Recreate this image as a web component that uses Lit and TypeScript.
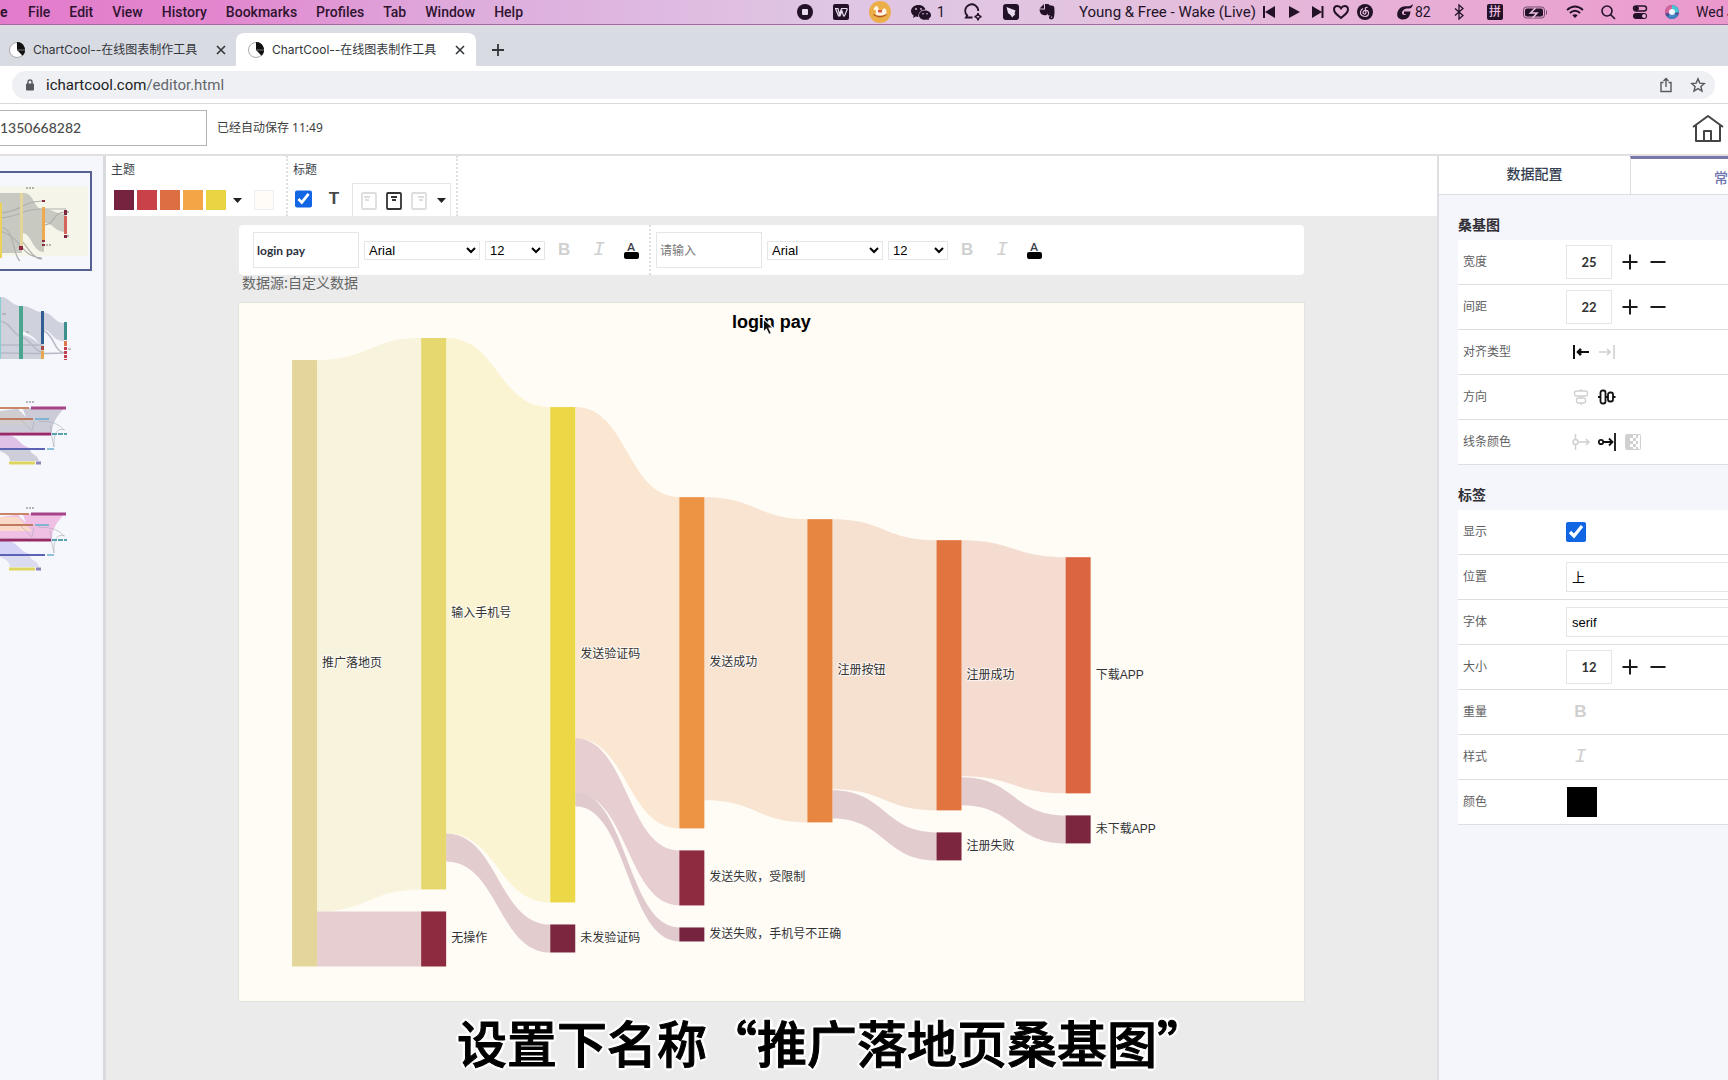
import { LitElement, html, css, svg } from "lit";
import { customElement, state } from "lit/decorators.js";

/* Shared look of every control in the editor. */
const base = css`
  *, *::before, *::after { box-sizing: border-box; }
  svg { display: block; flex: none; }
  button {
    appearance: none; border: 0; background: none; padding: 0; margin: 0;
    font: inherit; color: inherit; cursor: pointer;
    display: flex; align-items: center; justify-content: center;
  }
  input, select { margin: 0; border-radius: 0; outline: none; }
  .check { width: 20px; height: 20px; accent-color: #1266e3; }
  .off { color: #d0d0d0; }
`;

/* ---------------------------------------------------------------- menu bar */

@customElement("menu-bar")
export class MenuBar extends LitElement {
  static styles = [base, css`
    :host {
      display: flex; align-items: center; height: 25px; overflow: hidden;
      font: 500 14px/24px Roboto, "Noto Sans CJK SC", sans-serif; color: #2f1430;
      background: linear-gradient(90deg, #e37bcb 0%, #e287cf 13%, #deacdc 27%, #dfc6e4 48%, #e2c4e0 62%, #e7b3d8 78%, #eb98cd 100%);
      border-bottom: 1px solid #a2689f;
    }
    nav { display: flex; gap: 19px; }
    nav a { color: inherit; text-decoration: none; }
    .app { font-weight: 700; width: 9px; }
    .status { display: flex; align-items: center; margin-left: auto; flex: none; color: #231227; }
    .wide { display: flex; align-items: center; gap: 20px; }
    .near { display: flex; align-items: center; gap: 16px; margin-left: 18px; }
    .player { display: flex; align-items: center; gap: 8px; margin-left: 6px; }
    .song { margin-left: 24px; width: 176px; font-size: 15px; font-weight: 400; white-space: nowrap; }
    .pair { display: flex; align-items: center; gap: 2px; width: 34px; font-weight: 400; }
    .chat { width: 32px; gap: 6px; }
    .stats { margin-left: 24px; }
    .ime { width: 16px; height: 16px; border-radius: 2px; background: #231227; color: #eebbe0; font-size: 12px; line-height: 16px; text-align: center; }
    .date { width: 32px; white-space: nowrap; font-weight: 400; }
  `];

  render() {
    return html`
      <nav aria-label="menu">
        <a class="app" href="#">e</a>
        ${["File", "Edit", "View", "History", "Bookmarks", "Profiles", "Tab", "Window", "Help"].map((m) => html`<a href="#">${m}</a>`)}
      </nav>
      <div class="status">
        <div class="wide">
          <svg width="16" height="16"><circle cx="8" cy="8" r="8" fill="#231227"/><rect x="5" y="5" width="6" height="6" rx="1" fill="#eadcf0"/></svg>
          <svg width="16" height="16"><rect width="16" height="16" rx="2" fill="#231227"/><path d="M2 4.500h3l1.500 6 2-6h5.500M2.500 4.500l3 7.500h1.500l2-5 1.500 5h1l3-7.500" fill="none" stroke="#eadcf0" stroke-width="1.200"/></svg>
          <svg width="22" height="22"><circle cx="11" cy="11" r="11" fill="#ecae48"/><path d="M4.500 8.500L6 5.500l2.500-.5 1.500 4h3.500l1.500-2 2 1.500.5 3-1 3H6.500l.5-5z" fill="#fff6e6"/><path d="M9 9h4v2.500H9z" fill="#d4574b"/><path d="M4.500 13.500q6.500 4.500 13 0" fill="none" stroke="#b25d1f" stroke-width="1.500"/></svg>
          <div class="pair chat">
            <svg width="20" height="16" fill="#231227"><path d="M7.500 1C3.300 1 0 3.700 0 7c0 1.900 1 3.500 2.700 4.600L2 14l2.700-1.400c.9.2 1.700.4 2.700.4C7 9 10 5.500 14.500 5.500 13.800 2.900 11 1 7.500 1z"/><path d="M14 6.500c-3.300 0-6 2-6 4.700s2.700 4.600 6 4.600c.7 0 1.400-.1 2-.3l2 .9-.4-1.700c1.500-.9 2.400-2.100 2.400-3.500 0-2.700-2.700-4.700-6-4.700z"/><g fill="#dfc6e4"><circle cx="5" cy="5" r=".9"/><circle cx="10" cy="5" r=".9"/><circle cx="12" cy="9.800" r=".8"/><circle cx="16" cy="9.800" r=".8"/></g></svg><span>1</span>
          </div>
          <svg width="20" height="18" fill="none" stroke="#231227" stroke-width="1.800"><path d="M9.500 14.500H3l1.200-2A6.500 6.500 0 1 1 15.200 8"/><path d="M15 10q.5 3.200 3.500 3.700-3 .500-3.500 3.700-.5-3.200-3.500-3.700 3-.5 3.500-3.700z" stroke-width="1.300"/></svg>
          <svg width="16" height="16"><rect width="16" height="16" rx="3" fill="#231227"/><path d="M3.500 3l9 3.500-1 3 1 .5-3.500 3.500-1-2L5 9z" fill="#eadcf0"/></svg>
          <svg width="16" height="18" fill="#231227"><path d="M5 1 .5 5.500H5zM6 1h3c1 0 1.500.8 1.500 1.300C13 2.500 15 2.800 15.200 4c.5 3.500.5 8-.5 11-.7 2-4.700 2-4.700-.5 0-1.500 1-2 2.500-2v1.500H12c-.5 1 1 1 1.200 0 .2-1-1-1.800-3.200-1.500-1 0-1.500-.8-1.600-2C8 12 7 12.500 5.500 12.200 2.500 12 1 10.500.5 6.500H6z"/></svg>
        </div>
        <span class="song">Young &amp; Free - Wake (Live)</span>
        <div class="player">
          <svg width="16" height="16" fill="#231227"><path d="M2 2h2v12H2zM14 2v12L4 8z"/></svg>
          <svg width="16" height="16" fill="#231227"><path d="M4 2l11 6-11 6z"/></svg>
          <svg width="16" height="16" fill="#231227"><path d="M12.500 2h2v12h-2zM3 2v12l10-6z"/></svg>
          <svg width="16" height="16" fill="none" stroke="#231227" stroke-width="2"><path d="M8 14C3.500 10.500 1 8.500 1 5.600 1 3.400 2.600 2 4.400 2 6 2 7.300 3 8 4.200 8.700 3 10 2 11.600 2 13.400 2 15 3.400 15 5.600 15 8.500 12.500 10.500 8 14z"/></svg>
          <svg width="16" height="16" fill="none" stroke="#eabfe0" stroke-width="1.200"><circle cx="8" cy="8" r="8" fill="#231227" stroke="none"/><path d="M10.500 3.500Q8 3 8.300 5l.7 3.500a1.500 1.500 0 1 1-2.700-.8C6.800 6.500 10 5.500 11.200 7.500 12.500 10 11 12.500 8 12.500S3 10.500 3.500 8Q4 5.500 6 4.500"/></svg>
        </div>
        <div class="wide stats">
          <span class="pair"><svg width="16" height="16" fill="#231227"><path d="M16 0c-.5 3-2 4.500-4 4.500C8.500 4 5 6 5 9c0 2.200 3.200 2.500 4.300 1H7V7.500h6.500C13 12.500 10.500 15.500 6 15.500 2 15.500 0 13 .2 10 .5 5.500 4 2 9 2.200 12 2.400 14 2 16 0z"/></svg>82</span>
          <svg width="16" height="16" fill="none" stroke="#231227" stroke-width="1.300"><path d="M4 4.500l8 7L8 15V1l4 3.500-8 7"/></svg>
          <span class="ime">拼</span>
          <svg width="25" height="13" fill="none" stroke="#231227"><rect x=".5" y="1" width="21" height="11" rx="3" opacity=".6"/><rect x="2" y="2.500" width="18" height="8" rx="2" fill="#231227" stroke="none"/><path d="M23.500 4.500v4" opacity=".6"/><path d="M12.500 2L7.500 7H14L9.500 12" stroke="#eabfe0" stroke-width="1.600"/></svg>
        </div>
        <div class="near">
          <svg width="18" height="14" fill="none" stroke="#231227" stroke-width="1.800"><path d="M1 5q8-7 16 0M3.800 8q5.200-4.500 10.400 0"/><path d="M9 13L6.300 10.300q2.700-2 5.400 0z" fill="#231227" stroke="none"/></svg>
          <svg width="16" height="16" fill="none" stroke="#231227" stroke-width="1.600"><circle cx="7" cy="7" r="5"/><path d="M10.500 10.500L15 15"/></svg>
          <svg width="16" height="16" fill="none" stroke="#231227"><rect x="1.500" y="2" width="13" height="5" rx="2.500" stroke-width="1.400"/><circle cx="4.500" cy="4.500" r="2" fill="#231227"/><rect x="1" y="9" width="14" height="6" rx="3" fill="#231227" stroke="none"/><circle cx="12" cy="12" r="2" fill="#eab0dc" stroke="none"/></svg>
          <svg width="16" height="16"><circle cx="8" cy="8" r="7" fill="#4b4f8c"/><path d="M8 1a7 7 0 0 0-6.900 8Q5 10 8 7z" fill="#d6629b"/><path d="M8 1a7 7 0 0 1 7 7q-3 2-7-1z" fill="#49c5d4"/><path d="M3 13a7 7 0 0 0 11-1.500L8 8z" fill="#4383c4"/><circle cx="8" cy="8" r="3" fill="#f4f7ff"/></svg>
          <span class="date">Wed J</span>
        </div>
      </div>
    `;
  }
}

/* ------------------------------------------------------- browser tab strip */

@customElement("browser-chrome")
export class BrowserChrome extends LitElement {
  static styles = [base, css`
    :host { display: block; font: 400 12px/16px Inter, "Noto Sans CJK SC", sans-serif; color: #33363b; }
    .tabs { display: flex; align-items: flex-end; height: 41px; background: linear-gradient(#dfdbe4, #d9dbe3 6px); }
    .tab { display: flex; align-items: center; height: 33px; gap: 8px; }
    .idle { width: 236px; padding: 0 9px; }
    .current { width: 240px; padding: 0 10px 0 12px; background: #fff; border-radius: 8px 8px 0 0; }
    .title { flex: 1; white-space: nowrap; overflow: hidden; }
    .x { width: 12px; height: 12px; }
    .plus { width: 44px; height: 33px; }
    .address { background: #fff; padding: 5px 13px 4px 12px; border-bottom: 1px solid #d9d9dc; }
    .pill { display: flex; align-items: center; height: 28px; padding: 0 9px 0 14px; border-radius: 14px; background: #eff0f3; }
    .url { margin-left: 12px; font: 400 15px/20px Roboto, sans-serif; color: #63666b; flex: 1; }
    .host { color: #202124; }
    .tools { display: flex; gap: 16px; }
  `];

  private pie = html`<svg width="16" height="16"><circle cx="8" cy="8" r="7.500" fill="#fff" stroke="#aaa"/><path d="M8 0a8 8 0 0 1 5.500 13.800L8 8z" fill="#111"/><path d="M8 8h8" stroke="#777"/></svg>`;
  private cross = html`<svg width="10" height="10" stroke="#33363b" stroke-width="1.600"><path d="M1 1l8 8M9 1L1 9"/></svg>`;

  render() {
    return html`
      <div class="tabs">
        ${["idle", "current"].map((kind) => html`
          <div class="tab ${kind}">
            ${this.pie}<span class="title">ChartCool--在线图表制作工具</span>
            <button class="x" aria-label="关闭">${this.cross}</button>
          </div>`)}
        <button class="plus" aria-label="新标签页"><svg width="12" height="12" stroke="#33363b" stroke-width="1.800"><path d="M6 0v12M0 6h12"/></svg></button>
      </div>
      <div class="address">
        <div class="pill">
          <svg width="8" height="12"><rect y="4.500" width="8" height="7" rx="1" fill="#55585e"/><path d="M2 5V3a2 2 0 0 1 4 0v2" fill="none" stroke="#55585e" stroke-width="1.400"/></svg>
          <span class="url"><span class="host">ichartcool.com</span>/editor.html</span>
          <div class="tools">
            <button aria-label="分享"><svg width="16" height="16" fill="none" stroke="#55585e" stroke-width="1.400"><path d="M5.500 5.500H3V14.500h10v-9h-2.500M8 10V1.500M5.500 4L8 1.500 10.500 4"/></svg></button>
            <button aria-label="收藏"><svg width="16" height="16" fill="none" stroke="#55585e" stroke-width="1.400"><path d="M8 1.800l1.800 4.300 4.600.4-3.500 3 1.100 4.600L8 11.600l-4 2.500 1.100-4.600-3.500-3 4.600-.4z"/></svg></button>
          </div>
        </div>
      </div>
    `;
  }
}

/* ---------------------------------------------------------- thumbnail list */

@customElement("thumb-list")
export class ThumbList extends LitElement {
  static styles = [base, css`
    :host { display: flex; flex-direction: column; gap: 6px; width: 106px; padding-top: 15px; background: #f5f7fc; border-right: 3px solid #d9d9de; flex: none; }
    button { width: 92px; height: 100px; overflow: hidden; }
    button.picked { box-shadow: inset -2px 0 #566091, inset 0 2px #566091, inset 0 -2px #566091; }
  `];

  private flowA = svg`
    <rect y="15" width="88" height="70" fill="#f6f5e9"/>
    <path d="M0 22h24c10 0 10 16 18 16 12 0 10 4 24 5v18c-12 0-12-9-22-9v29c-12 0-12-19-22-19v20H0z" fill="#c5c6bf" opacity=".95"/>
    <g fill="none" stroke="#b0b1ae" stroke-width="1.200"><path d="M0 42C24 40 20 31 42 30M0 47c24-2 20-9 42-9h24M0 60c22 6 20 26 42 27M0 56c16 2 12 28 20 34M22 70c8 10 12 18 20 18M44 54c12 0 8-13 21-13"/></g>
    <rect y="32" width="2" height="55" fill="#ecd25c"/><rect x="20" y="22" width="3" height="53" fill="#e3d59c"/><rect x="42" y="36" width="3" height="34" fill="#efa94e"/><rect x="64" y="45" width="3" height="18" fill="#d7645a"/>
    <rect x="64" y="39" width="3" height="5" fill="#7c273f"/><rect x="64" y="64" width="3" height="3" fill="#7c273f"/><rect x="42" y="29" width="3" height="2" fill="#8f2b40"/><rect x="19" y="75" width="4" height="4" fill="#8f2b40"/><rect x="42" y="69" width="3" height="2" fill="#8f2b40"/><rect x="42" y="73" width="3" height="2" fill="#8f2b40"/>
    <path d="M26 17h8M67 41h2M67 65h2M46 74h5" stroke="#777" stroke-dasharray="2 1"/>`;

  private flowB = svg`
    <path d="M0 20c10 0 10 8 21 9 12 0 12 6 21 6 12 1 12 11 22 11v18c-12 0-12-11-20-11v29H0z" fill="#cfd1dc"/>
    <g fill="none" stroke="#b6bac6" stroke-width="1.500"><path d="M0 44c12 2 12 14 22 16M0 68h42M0 76c22 0 40 1 63 0M22 60c10 4 12 14 20 15M44 54c10 4 10 20 20 22"/></g>
    <path d="M22 54q12 4 18 14-10-10-18-10z" fill="#f5f7fc"/>
    <rect y="20" width="1" height="62" fill="#8bcdd4"/><rect x="19" y="29" width="4" height="53" fill="#49a58e"/><rect x="41" y="34" width="3" height="33" fill="#315e92"/><rect x="41" y="69" width="3" height="4" fill="#a34b45"/><rect x="41" y="74" width="3" height="8" fill="#e6a74d"/>
    <rect x="64" y="45" width="3" height="18" fill="#3c8f8a"/><rect x="64" y="64" width="3" height="5" fill="#dd7a4b"/><path d="M65.500 70v13" stroke="#c43f4c" stroke-width="3" stroke-dasharray="3 1"/><path d="M2 37h4M26 55h3M68 72h3" stroke="#999"/>`;

  private bars = (fan: string, top: string, mid: string, low: string) => svg`
    <path d="M24 17h40c-6 8-11 12-12 24H0V20z" fill="${fan}"/>
    <path d="M0 20h18l14 14H0z" fill="${top}"/><path d="M0 43c20 0 16 10 30 14H0z" fill="${mid}"/><path d="M0 58h30c0 6 8 5 9 12H10C10 64 4 62 0 60z" fill="${low}"/>
    <path d="M20 28l12 12 2-10M50 34q2 14 4 22M65 39q-12-4-11 17M38 30q20 0 26 9" fill="none" stroke="#a9abb8" stroke-width="1" opacity=".6"/>
    <path d="M18 18l8 8-3-8z" fill="#f5f7fc"/>
    <path d="M0 17h29" stroke="#c98565" stroke-width="2"/><path d="M31 17h35" stroke="#a74488" stroke-width="3"/><path d="M0 28h33" stroke="#bf7c60" stroke-width="2"/><path d="M35 28h14" stroke="#7fb5d3" stroke-width="2"/>
    <path d="M0 43h51" stroke="#962b68" stroke-width="3"/><path d="M52 43h15" stroke="#5aa2b0" stroke-width="2" stroke-dasharray="5 1"/><path d="M0 58h45" stroke="#5c62b4" stroke-width="2"/><path d="M47 58h7" stroke="#8fc0da" stroke-width="2"/>
    <path d="M9 72h26" stroke="#dcd65f" stroke-width="3"/><path d="M36 72h5" stroke="#8a85b6" stroke-width="3"/><path d="M26 11h8" stroke="#777" stroke-dasharray="2 1"/>`;

  render() {
    const art = [
      this.flowA, this.flowB,
      this.bars("#ccccd8", "#cfcdcf", "#dfc0e6", "#cdced9"),
      this.bars("#efc0e4", "#fad9c8", "#d5d2f7", "#dcdcf0"),
    ];
    return art.map((a, i) => html`
      <button class=${i === 0 ? "picked" : ""} aria-label="图表 ${i + 1}">
        <svg width="92" height="100" viewBox=${i < 2 ? "0 0 92 100" : "0 -8 92 100"}>${a}</svg>
      </button>`);
  }
}

/* ------------------------------------------------------------ sankey chart */

interface Node { name: string; x: number; y: number; h: number; fill: string; }
interface Link { x: number; from: number; to: number; h: number; fill: string; }

const nodes: Node[] = [
  { name: "推广落地页", x: 53, y: 57, h: 606, fill: "#e4d69b" },
  { name: "输入手机号", x: 182, y: 35, h: 551, fill: "#e7d76f" },
  { name: "无操作", x: 182, y: 608, h: 55, fill: "#8f2b40" },
  { name: "发送验证码", x: 311, y: 104, h: 495, fill: "#ecd747" },
  { name: "未发验证码", x: 311, y: 621, h: 28, fill: "#7c273f" },
  { name: "发送成功", x: 440, y: 194, h: 331, fill: "#ed9344" },
  { name: "发送失败，受限制", x: 440, y: 547, h: 55, fill: "#8f2b40" },
  { name: "发送失败，手机号不正确", x: 440, y: 624, h: 14, fill: "#75233f" },
  { name: "注册按钮", x: 568, y: 216, h: 303, fill: "#e68640" },
  { name: "注册成功", x: 697, y: 237, h: 270, fill: "#e0753f" },
  { name: "注册失败", x: 697, y: 529, h: 28, fill: "#7c273f" },
  { name: "下载APP", x: 826, y: 254, h: 236, fill: "#db6540" },
  { name: "未下载APP", x: 826, y: 512, h: 28, fill: "#7c273f" },
];

const links: Link[] = [
  { x: 78, from: 57, to: 35, h: 551, fill: "#f8f3dc" },
  { x: 78, from: 608, to: 608, h: 55, fill: "#e7ced0" },
  { x: 207, from: 35, to: 104, h: 495, fill: "#faf4d2" },
  { x: 207, from: 530, to: 621, h: 28, fill: "#e3ccce" },
  { x: 336, from: 104, to: 194, h: 331, fill: "#fae6d1" },
  { x: 336, from: 435, to: 547, h: 55, fill: "#e7ced0" },
  { x: 336, from: 489, to: 624, h: 14, fill: "#e0cacd" },
  { x: 465, from: 194, to: 216, h: 303, fill: "#f9e4d2" },
  { x: 593, from: 216, to: 237, h: 270, fill: "#f6e0d0" },
  { x: 593, from: 487, to: 529, h: 28, fill: "#e3ccce" },
  { x: 722, from: 237, to: 254, h: 236, fill: "#f5dcd0" },
  { x: 722, from: 474, to: 512, h: 28, fill: "#e3ccce" },
];

const ribbon = (l: Link) => {
  const end = l.x + 104;
  const mid = l.x + 52;
  return `M${l.x} ${l.from}C${mid} ${l.from} ${mid} ${l.to} ${end} ${l.to}V${l.to + l.h}C${mid} ${l.to + l.h} ${mid} ${l.from + l.h} ${l.x} ${l.from + l.h}Z`;
};

@customElement("sankey-chart")
export class SankeyChart extends LitElement {
  static styles = [base, css`
    :host { display: block; background: #fffcf5; outline: 1px solid #e4e2dd; }
    svg { width: 100%; height: auto; }
    .title { font: 700 18px "Liberation Sans", Arial, sans-serif; text-anchor: middle; }
    .label { font: 400 12px "Liberation Sans", "Noto Sans CJK SC", sans-serif; fill: #333; stroke: #fff; stroke-opacity: .7; stroke-width: 2px; paint-order: stroke; }
  `];

  render() {
    return html`
      <svg viewBox="0 0 1064 697" role="img" aria-label="login pay">
        ${links.map((l) => svg`<path d=${ribbon(l)} fill=${l.fill}></path>`)}
        ${nodes.map((n) => svg`<rect x=${n.x} y=${n.y} width="25" height=${n.h} fill=${n.fill}></rect>`)}
        ${nodes.map((n) => svg`<text class="label" x=${n.x + 30} y=${Math.floor(n.y + n.h / 2) + 4}>${n.name}</text>`)}
        <text class="title" x="532" y="25">login pay</text>
        <path d="M524 16v13l3-3 2.500 5.500 2.500-1-2.500-5.500h4.500z" fill="#111" stroke="#fff" stroke-width="1"/>
      </svg>`;
  }
}

/* ------------------------------------------------------------ title editor */

@customElement("title-tools")
export class TitleTools extends LitElement {
  static styles = [base, css`
    :host { display: flex; height: 50px; background: #fff; border-radius: 4px; }
    .set { display: flex; align-items: center; gap: 5px; padding-left: 14px; width: 412px; border-right: 2px dotted #dedede; }
    .set + .set { border: 0; padding-left: 5px; }
    .words { width: 106px; height: 36px; border: 1px solid #e6e6e6; padding: 0 3px; font: 700 12px Lato, "Noto Sans CJK SC", sans-serif; color: #2c3140; }
    .words::placeholder { color: #777; font-weight: 400; opacity: 1; }
    .pick { display: grid; align-items: center; width: 116px; height: 19px; }
    .pick.small { width: 60px; }
    .pick select, .pick svg { grid-area: 1 / 1; }
    .pick svg { justify-self: end; margin-right: 4px; pointer-events: none; }
    select { appearance: none; width: 100%; height: 19px; border: 1px solid #e6e6e6; background: #fff; padding: 0 4px; font: 13px "Liberation Sans", Arial, sans-serif; color: #000; }
    .marks { display: flex; align-items: center; gap: 8px; margin-left: 2px; }
    .marks button { width: 24px; height: 24px; }
    .marks .bold { font: 700 17px/24px "Liberation Sans", Arial, sans-serif; margin-right: 3px; }
    .slant { font: italic 20px/24px "Liberation Mono", monospace; }
    .ink { flex-direction: column; font: 700 11px/11px Lato, sans-serif; }
  `];

  private pick(label: string, value: string, small = false) {
    return html`<span class="pick ${small ? "small" : ""}"><select aria-label=${label}><option>${value}</option></select><svg width="10" height="7" fill="none" stroke="#000" stroke-width="2"><path d="M1 1l4 4 4-4"/></svg></span>`;
  }

  private group(label: string, value: string, hint: string) {
    return html`
      <div class="set">
        <input class="words" type="text" aria-label=${label} .value=${value} placeholder=${hint}>
        ${this.pick("字体", "Arial")}${this.pick("大小", "12", true)}
        <div class="marks">
          <button class="bold off" aria-label="加粗">B</button>
          <button class="slant off" aria-label="斜体">I</button>
          <button class="ink" aria-label="颜色">A<svg width="15" height="7"><rect width="15" height="7" rx="2"/></svg></button>
        </div>
      </div>`;
  }

  render() {
    return [this.group("标题", "login pay", ""), this.group("副标题", "", "请输入")];
  }
}

/* ---------------------------------------------------------- property panel */

@customElement("property-panel")
export class PropertyPanel extends LitElement {
  static styles = [base, css`
    :host { display: block; width: 291px; flex: none; background: #f5f6fb; border-left: 2px solid #dfdfe3; font: 400 12px/16px "Noto Sans", "Noto Sans CJK SC", sans-serif; color: #5f5f63; }
    .tabs { display: grid; grid-template-columns: 191px 1fr; height: 39px; background: #fff; border-bottom: 1px solid #dfdfe3; overflow: hidden; }
    .tabs button { font: 500 14px/20px "Noto Sans CJK SC", sans-serif; color: #363f52; padding-bottom: 4px; }
    .tabs .now { justify-content: flex-end; padding: 0; border-left: 1px solid #dfdfe3; border-top: 3px solid #7679a9; color: #7076b0; }
    section { padding-left: 19px; }
    h2 { margin: 0; height: 45px; padding-top: 15px; font: 700 14px/28px "Noto Sans CJK SC", sans-serif; color: #303036; }
    .row { display: flex; align-items: center; height: 45px; padding-left: 5px; background: #fff; border-bottom: 1px solid #dedee2; }
    .name { width: 103px; flex: none; }
    .num { width: 46px; height: 34px; border: 1px solid #e6e6e6; text-align: center; font: 700 13px Lato, sans-serif; color: #333; margin-right: 9px; padding: 0; }
    .step { width: 18px; height: 24px; margin-right: 10px; color: #1b1b1b; }
    .icons { display: flex; gap: 3px; padding-left: 3px; color: #111; }
    .icons button { width: 23px; height: 24px; }
    select { appearance: none; flex: 1; height: 30px; border: 1px solid #e6e6e6; border-right: 0; background: #fff; padding: 0 5px; font: 13px "Liberation Sans", "Noto Sans CJK SC", sans-serif; color: #000; }
    .bold { font: 700 17px/24px "Liberation Sans", Arial, sans-serif; }
    .slant { font: italic 20px/24px "Liberation Mono", monospace; }
    .color { width: 30px; height: 30px; background: #000; margin-left: 1px; }
  `];

  private num(id: string, name: string, value: string) {
    return html`<div class="row"><label class="name" for=${id}>${name}</label>
      <input class="num" id=${id} type="text" .value=${value}>
      <button class="step" aria-label="增加"><svg width="16" height="16" stroke="currentColor" stroke-width="2"><path d="M8 .5v15M.5 8h15"/></svg></button>
      <button class="step" aria-label="减少"><svg width="16" height="16" stroke="currentColor" stroke-width="2"><path d="M.5 8h15"/></svg></button></div>`;
  }

  private row(name: string, body: unknown) {
    return html`<div class="row"><span class="name">${name}</span><div class="icons">${body}</div></div>`;
  }

  render() {
    return html`
      <div class="tabs"><button>数据配置</button><button class="now">常</button></div>
      <section>
        <h2>桑基图</h2>
        ${this.num("w", "宽度", "25")}${this.num("g", "间距", "22")}
        ${this.row("对齐类型", html`
          <button aria-label="左对齐"><svg width="16" height="16" stroke="currentColor" fill="none" stroke-width="2"><path d="M1 1v14M4 8h12"/><path d="M8 5L5 8l3 3" stroke-width="2.500"/></svg></button>
          <button class="off" aria-label="右对齐"><svg width="16" height="16" stroke="currentColor" fill="none" stroke-width="1.600"><path d="M15 1v14M0 8h11M8 5l3 3-3 3"/></svg></button>`)}
        ${this.row("方向", html`
          <button class="off" aria-label="纵向"><svg width="16" height="18" stroke="currentColor" fill="none" stroke-width="1.400"><rect x="1.500" y="3" width="13" height="5" rx="2"/><rect x="3.500" y="10" width="9" height="5" rx="2"/><path d="M8 1v2M8 8v2M8 15v2"/></svg></button>
          <button aria-label="横向"><svg width="18" height="16" stroke="currentColor" fill="none" stroke-width="1.800"><rect x="2.500" y="1.500" width="5" height="13" rx="2"/><rect x="10" y="3.500" width="5" height="9" rx="2"/><path d="M0 8h2.500M7.500 8H10M15 8h2.500"/></svg></button>`)}
        ${this.row("线条颜色", html`
          <button class="off" aria-label="源色"><svg width="18" height="18" stroke="currentColor" fill="none" stroke-width="1.500"><path d="M3.500 1v5M3.500 12v5M6.500 9H17M14 6l3 3-3 3"/><circle cx="3.500" cy="9" r="2.500"/></svg></button>
          <button aria-label="目标色"><svg width="18" height="18" stroke="currentColor" fill="none" stroke-width="1.800"><path d="M17 0v18M5.500 9H14M11 5.500L14.500 9 11 12.500"/><circle cx="3" cy="9" r="2.200"/></svg></button>
          <button class="off" aria-label="渐变"><svg width="16" height="16" fill="currentColor"><rect x=".5" y=".5" width="15" height="15" rx="1" fill="none" stroke="currentColor"/><path d="M1 1h4v14H1zM5 1h3v3H5zM8 4h3v3H8zM5 7h3v3H5zM8 10h3v3H8zM5 13h3v2H5zM11 1h2v3h-2zM11 7h2v3h-2zM11 13h2v2h-2z"/></svg></button>`)}
      </section>
      <section>
        <h2>标签</h2>
        <div class="row"><label class="name" for="show">显示</label><input class="check" id="show" type="checkbox" checked></div>
        <div class="row"><label class="name" for="pos">位置</label><select id="pos"><option>上</option></select></div>
        <div class="row"><label class="name" for="face">字体</label><select id="face"><option>serif</option></select></div>
        ${this.num("s", "大小", "12")}
        ${this.row("重量", html`<button class="bold off" aria-label="加粗">B</button>`)}
        ${this.row("样式", html`<button class="slant off" aria-label="斜体">I</button>`)}
        <div class="row"><span class="name">颜色</span><button class="color" aria-label="颜色"></button></div>
      </section>
    `;
  }
}

/* -------------------------------------------------------------------- page */

@customElement("app-root")
export class AppRoot extends LitElement {
  static styles = [base, css`
    :host { display: flex; flex-direction: column; position: relative; min-height: 100vh; overflow: hidden; font: 400 12px/16px "Noto Sans", "Noto Sans CJK SC", sans-serif; color: #3c3f4a; background: #fff; }
    header { display: flex; align-items: center; height: 52px; padding: 0 4px 2px 0; border-bottom: 2px solid #e2dfe1; }
    .file { width: 207px; height: 36px; border: 1px solid #b5b5b5; border-left: 0; padding: 0 0 2px; font: 500 14px Lato, sans-serif; color: #4c4c4c; }
    .saved { margin-left: 10px; flex: 1; color: #3e3e3e; }
    .body { display: flex; flex: 1; }
    main { flex: 1; min-width: 0; display: flex; flex-direction: column; background: #ebebeb; }
    .bar { display: flex; height: 60px; background: #fff; overflow: hidden; }
    .group { border-right: 2px dotted #e0e0e0; padding: 5px 5px 0; }
    .group h3 { margin: 0; font: 400 12px/16px "Noto Sans CJK SC", sans-serif; }
    .line { display: flex; align-items: center; height: 32px; }
    .theme { width: 182px; }
    .theme .line { gap: 3px; padding: 4px 3px 0; margin-top: 5px; }
    .swatch { width: 20px; height: 20px; }
    .c0 { background: #75233f; } .c1 { background: #ca4249; } .c2 { background: #dd6d43; } .c3 { background: #f4a546; } .c4 { background: #e9d542; }
    .paper { background: #fffcf7; border: 1px solid #eee; margin-left: 8px; }
    .caret { width: 12px; height: 20px; margin-left: 2px; }
    .heading { width: 170px; }
    .heading .line { margin: 6px 0 0 2px; align-items: flex-start; }
    .heading .check { margin-top: 6px; }
    .tee { width: 32px; height: 32px; margin: 0 2px 0 6px; font: 700 17px/32px "Liberation Sans", Arial, sans-serif; color: #474747; flex: none; }
    .places { display: flex; align-items: center; gap: 5px; border: 1px solid #e6e6e6; width: 99px; height: 35px; padding-left: 6px; flex: none; }
    .places button { width: 20px; height: 24px; color: #333; }
    .places .off { color: #ddd; }
    .places .caret { width: 12px; margin-left: 1px; }
    .stage { width: 80%; margin: 9px auto 0; }
    .source { font: 400 14px/14px "Noto Sans CJK SC", sans-serif; color: #666; padding-left: 3px; }
    .stage sankey-chart { margin-top: 14px; }
    .caption {
      position: absolute; left: 457px; bottom: 3px; margin: 0; white-space: nowrap;
      font: 500 50px/72px "Noto Sans CJK SC", sans-serif; color: #000; -webkit-text-stroke: 1px #000;
      text-shadow: 3px 0 1px #fff, -3px 0 1px #fff, 0 3px 1px #fff, 0 -3px 1px #fff, 2px 2px 1px #fff, -2px 2px 1px #fff, 2px -2px 1px #fff, -2px -2px 1px #fff;
    }
  `];

  @state() private place = 1;

  private card(i: number, x: number) {
    return html`<button class=${this.place === i ? "" : "off"} aria-label="位置 ${i + 1}" @click=${() => (this.place = i)}>
      <svg width="16" height="18" fill="none" stroke="currentColor" stroke-width="1.800"><rect x="1" y="1" width="14" height="16" rx="1"/><path d="M${x} 5h6M${x + 1} 8h4"/></svg></button>`;
  }

  render() {
    const caret = html`<svg width="9" height="5"><path d="M0 0h9L4.500 5z" fill="#222"/></svg>`;
    return html`
      <menu-bar></menu-bar>
      <browser-chrome></browser-chrome>
      <header>
        <input class="file" type="text" aria-label="文件名" value="1350668282">
        <span class="saved">已经自动保存 11:49</span>
        <button aria-label="首页"><svg width="32" height="28" fill="none" stroke="#444" stroke-width="2" stroke-linejoin="round"><path d="M1 13L16 2l15 11M4 11v16h24V11M12 27V17h7v10"/></svg></button>
      </header>
      <div class="body">
        <thumb-list></thumb-list>
        <main>
          <div class="bar">
            <div class="group theme">
              <h3>主题</h3>
              <div class="line">
                ${[0, 1, 2, 3, 4].map((c) => html`<button class="swatch c${c}" aria-label="颜色 ${c + 1}"></button>`)}
                <button class="caret" aria-label="更多主题">${caret}</button>
                <button class="swatch paper" aria-label="背景色"></button>
              </div>
            </div>
            <div class="group heading">
              <h3>标题</h3>
              <div class="line">
                <input class="check" type="checkbox" aria-label="标题" checked>
                <button class="tee" aria-label="文字">T</button>
                <div class="places">${this.card(0, 3)}${this.card(1, 5)}${this.card(2, 7)}<button class="caret" aria-label="更多位置">${caret}</button></div>
              </div>
            </div>
          </div>
          <div class="stage">
            <title-tools></title-tools>
            <div class="source">数据源:自定义数据</div>
            <sankey-chart></sankey-chart>
          </div>
        </main>
        <property-panel></property-panel>
      </div>
      <p class="caption">设置下名称“推广落地页桑基图”</p>
    `;
  }
}
